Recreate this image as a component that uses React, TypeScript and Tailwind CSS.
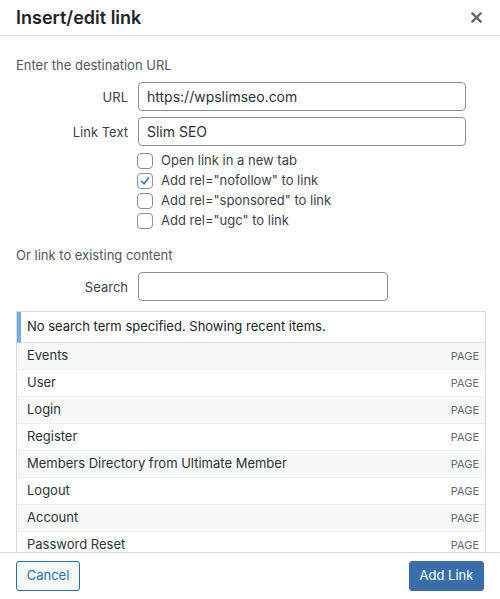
const items = [
  'Events',
  'User',
  'Login',
  'Register',
  'Members Directory from Ultimate Member',
  'Logout',
  'Account',
  'Password Reset',
];

const options = [
  { label: 'Open link in a new tab', checked: false },
  { label: 'Add rel="nofollow" to link', checked: true },
  { label: 'Add rel="sponsored" to link', checked: false },
  { label: 'Add rel="ugc" to link', checked: false },
];

function Checkbox({ checked }: { checked: boolean }) {
  return (
    <span className="flex h-4 w-4 shrink-0 items-center justify-center rounded-[4px] border border-[#8c8f94] bg-white">
      {checked && (
        <svg viewBox="0 0 16 16" className="h-4 w-4">
          <path d="M4.2 8.3 L7 11.2 L12 4.6" fill="none" stroke="#3582c4" strokeWidth="2" strokeLinecap="round" strokeLinejoin="round" />
        </svg>
      )}
    </span>
  );
}

export default function App() {
  return (
    <div className="flex h-[599px] w-[500px] flex-col overflow-hidden bg-white font-['Inter','Liberation_Sans',sans-serif] text-[13px] text-[#3c434a]">
      {/* Header */}
      <div className="flex h-[36px] shrink-0 items-center justify-between border-b border-[#dcdcde] pl-4 pr-[14px]">
        <h1 className="text-[18px] font-semibold leading-none text-[#1d2327]">Insert/edit link</h1>
        <button className="flex h-5 w-5 items-center justify-center">
          <svg viewBox="0 0 12 12" className="h-[11px] w-[11px]">
            <path d="M1.5 1.5 L10.5 10.5 M10.5 1.5 L1.5 10.5" stroke="#646970" strokeWidth="2.6" strokeLinecap="round" />
          </svg>
        </button>
      </div>

      {/* Body */}
      <div className="flex-1 overflow-hidden pl-4 pr-[14px] pt-[19px]">
        <p className="leading-5 text-[#50575e]">Enter the destination URL</p>

        <div className="mt-[7px] flex items-center gap-[10px]">
          <label className="w-[112px] pt-[3px] text-right">URL</label>
          <div className="flex h-[29px] w-[328px] items-center rounded-[4px] border border-[#8c8f94] px-2 text-[14px] text-[#2c3338]">
            https://wpslimseo.com
          </div>
        </div>
        <div className="mt-[6px] flex items-center gap-[10px]">
          <label className="w-[112px] pt-[3px] text-right">Link Text</label>
          <div className="flex h-[29px] w-[328px] items-center rounded-[4px] border border-[#8c8f94] px-2 text-[14px] text-[#2c3338]">
            Slim SEO
          </div>
        </div>

        <div className="ml-[121px] mt-[5px] flex flex-col">
          {options.map((o) => (
            <div key={o.label} className="flex h-5 items-center gap-2">
              <Checkbox checked={o.checked} />
              <span>{o.label}</span>
            </div>
          ))}
        </div>

        <p className="mt-[14px] leading-5 text-[#50575e]">Or link to existing content</p>

        <div className="mt-[7px] flex items-center gap-[10px]">
          <label className="w-[112px] pt-[3px] text-right">Search</label>
          <div className="h-[29px] w-[250px] rounded-[4px] border border-[#8c8f94]" />
        </div>

        <div className="mt-[10px] w-[470px] border border-[#dcdcde]">
          <div className="flex h-[31px] items-center border-b border-[#dcdcde] border-l-4 border-l-[#72aee6] pl-[6px] text-[#1d2327]">
            No search term specified. Showing recent items.
          </div>
          {items.map((item, i) => (
            <div
              key={item}
              className={`flex h-[27px] items-center justify-between border-b border-[#f0f0f1] pl-[10px] pr-[6px] text-[#2c3338] ${
                i % 2 === 0 ? 'bg-[#f6f7f7]' : 'bg-white'
              }`}
            >
              <span>{item}</span>
              <span className="text-[11px] text-[#646970]">PAGE</span>
            </div>
          ))}
        </div>
      </div>

      {/* Footer */}
      <div className="flex h-[47px] shrink-0 items-center justify-between border-t border-[#dcdcde] px-4">
        <button className="h-[30px] w-[64px] rounded-[3px] border border-[#2271b1] bg-[#f6f7f7] text-[13px] text-[#2271b1]">
          Cancel
        </button>
        <button className="h-[30px] w-[75px] rounded-[3px] border border-[#3a6ea8] bg-[#3a6ea8] text-[13px] text-white">
          Add Link
        </button>
      </div>
    </div>
  );
}
